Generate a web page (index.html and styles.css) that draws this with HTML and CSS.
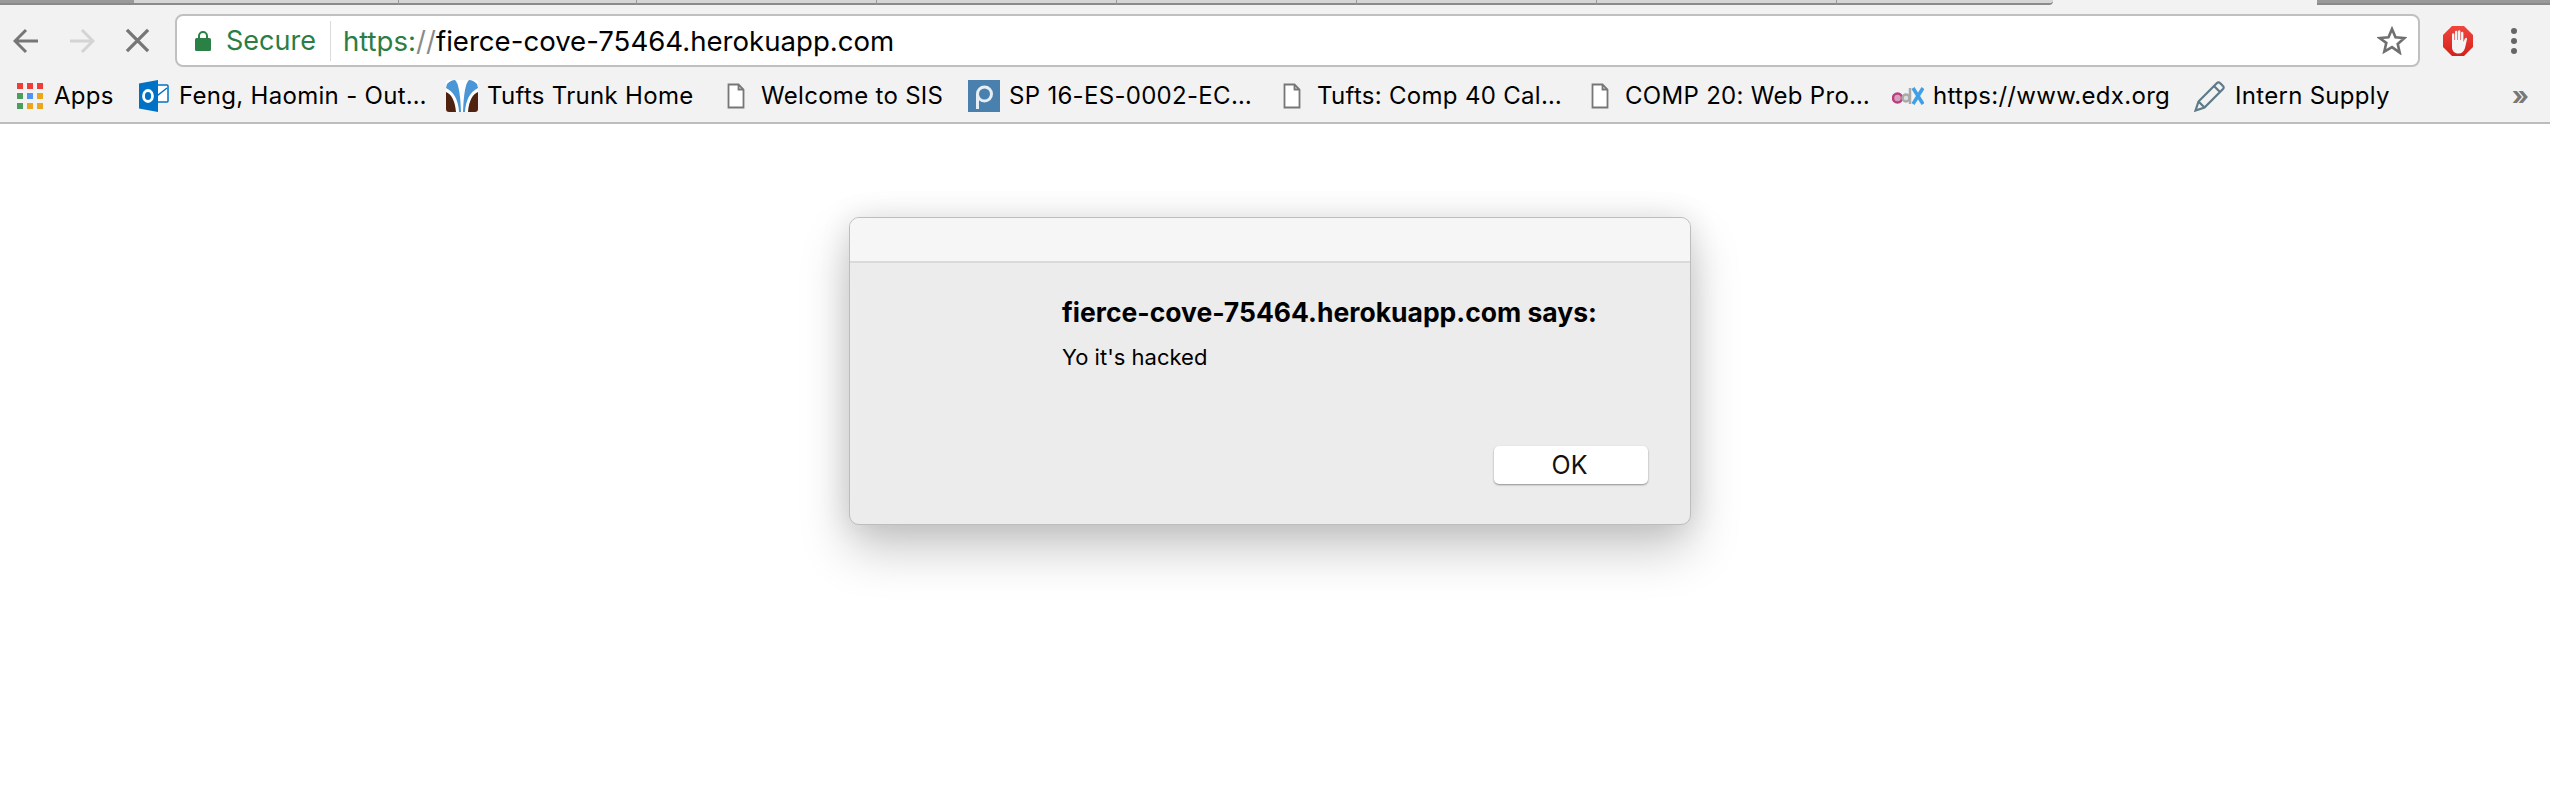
FILE: index.html
```html
<!DOCTYPE html>
<html lang="en">
<head>
  <meta charset="UTF-8" />
  <title>fierce-cove-75464.herokuapp.com</title>
  <link rel="stylesheet" href="styles.css">
</head>
<body>
  <div class="tabstrip">
    <div class="tab tab-dark tab-first"></div>
    <div class="tab tab-a"></div>
    <div class="tab tab-b"></div>
    <div class="tab tab-c"></div>
    <div class="tab tab-c"></div>
    <div class="tab tab-c"></div>
    <div class="tab tab-c"></div>
    <div class="tab tab-c"></div>
    <div class="tab tab-d"></div>
    <div class="tab tab-active"></div>
    <div class="tab tab-dark tab-last"></div>
  </div>

  <div class="toolbar">
    <div class="nav-btns">
      <svg class="nav-icon" viewBox="0 0 26 26"><path d="M25 13H2M13 2L2 13l11 11" fill="none" stroke="#767676" stroke-width="3"/></svg>
      <svg class="nav-icon nav-fwd" viewBox="0 0 26 26"><path d="M1 13h23M13 2l11 11-11 11" fill="none" stroke="#d4d4d4" stroke-width="3"/></svg>
      <svg class="nav-icon nav-stop" viewBox="0 0 26 26"><path d="M2 2l22 22M24 2L2 24" fill="none" stroke="#767676" stroke-width="3.4"/></svg>
    </div>
    <div class="omnibox">
      <svg class="lock" viewBox="0 0 16 21"><path d="M4 9V6a4 4 0 0 1 8 0v3" fill="none" stroke="#2b8046" stroke-width="2"/><rect x="0" y="8" width="16" height="13" rx="1.5" fill="#2b8046"/></svg>
      <span class="secure">Secure</span>
      <span class="omni-sep"></span>
      <span class="url"><span class="url-scheme">https:</span><span class="url-slash">//</span>fierce-cove-75464.herokuapp.com</span>
      <svg class="star" viewBox="0 0 30 29"><path d="M15 3l3.500 8.200 8.900.8-6.700 5.900 2 8.700L15 21.100l-7.700 4.500 2-8.700L2.600 12l8.900-.8z" fill="none" stroke="#707070" stroke-width="2.600"/></svg>
    </div>
    <svg class="abp" viewBox="0 0 30 30">
      <defs><linearGradient id="abpRed" x1="0" y1="0" x2="0" y2="1"><stop offset="0" stop-color="#f2453d"/><stop offset="1" stop-color="#d3211b"/></linearGradient></defs>
      <path d="M9 0h12l9 9v12l-9 9H9l-9-9V9z" fill="url(#abpRed)"/>
      <path d="M9 16V8.500a1.200 1.200 0 0 1 2.400 0V14h.6V6a1.200 1.200 0 0 1 2.400 0v8h.6V5.500a1.200 1.200 0 0 1 2.400 0V14h.6V7a1.200 1.200 0 0 1 2.400 0v9l1.500-3.500c.6-1.300 2.600-.7 2.100.8L22 22c-1 3.500-3 5.500-6.500 5.500C11.500 27.500 9 25 9 21z" fill="#f4f4f4"/>
    </svg>
    <div class="menu-dots"><i></i><i></i><i></i></div>
  </div>

  <div class="bookmarks">
    <div class="bm bm-apps">
      <span class="bm-icon">
        <span class="apps-grid"><i class="red"></i><i class="red"></i><i class="red"></i><i class="green"></i><i class="blue"></i><i class="amber"></i><i class="green"></i><i class="amber"></i><i class="amber"></i></span>
      </span>
      <span class="bm-text">Apps</span>
    </div>
    <div class="bm bm-wide">
      <svg class="bm-icon" viewBox="0 0 32 32"><path d="M11 5h18a1 1 0 0 1 1 1v15a1 1 0 0 1-1 1H11z" fill="#fff" stroke="#0072c6" stroke-width="1.500"/><path d="M12 8l8 7 9-7" fill="none" stroke="#0072c6" stroke-width="1.500"/><path d="M1 3.500L20 0v32L1 28.500z" fill="#0072c6"/><ellipse cx="10" cy="16" rx="4.500" ry="5.500" fill="none" stroke="#fff" stroke-width="2.800"/></svg>
      <span class="bm-text">Feng, Haomin - Out…</span>
    </div>
    <div class="bm bm-trunk">
      <svg class="bm-icon" viewBox="0 0 32 32"><rect width="32" height="32" rx="3" fill="#fff"/><path d="M0 12c5 2 9 8 10 20H3a3 3 0 0 1-3-3zM32 12c-5 2-9 8-10 20h7a3 3 0 0 0 3-3z" fill="#4f2310"/><path d="M1 4Q5 0 9 0q5 4 6 32h-2Q12 14 0 8zM31 4q-4-4-8-4-5 4-6 32h2q1-18 13-24z" fill="#4a96d6"/></svg>
      <span class="bm-text">Tufts Trunk Home</span>
    </div>
    <div class="bm bm-sis">
      <svg class="bm-icon" viewBox="0 0 32 32"><path d="M8.500 4.500h10l5 5v18h-15zM18.500 4.500v5h5" fill="#fff" stroke="#777" stroke-width="1.800"/></svg>
      <span class="bm-text">Welcome to SIS</span>
    </div>
    <div class="bm bm-wide">
      <svg class="bm-icon" viewBox="0 0 32 32"><rect width="32" height="32" fill="#4a80ae"/><circle cx="16.500" cy="14" r="7" fill="none" stroke="#e6eff6" stroke-width="3"/><path d="M9.500 14v15" stroke="#e6eff6" stroke-width="3"/></svg>
      <span class="bm-text">SP 16-ES-0002-EC…</span>
    </div>
    <div class="bm bm-wide">
      <svg class="bm-icon" viewBox="0 0 32 32"><path d="M8.500 4.500h10l5 5v18h-15zM18.500 4.500v5h5" fill="#fff" stroke="#777" stroke-width="1.800"/></svg>
      <span class="bm-text">Tufts: Comp 40 Cal…</span>
    </div>
    <div class="bm bm-wide">
      <svg class="bm-icon" viewBox="0 0 32 32"><path d="M8.500 4.500h10l5 5v18h-15zM18.500 4.500v5h5" fill="#fff" stroke="#777" stroke-width="1.800"/></svg>
      <span class="bm-text">COMP 20: Web Pro…</span>
    </div>
    <div class="bm bm-edx">
      <svg class="bm-icon" viewBox="0 0 32 32"><circle cx="5.500" cy="18" r="4.500" fill="#d9a0be" stroke="#b93f80" stroke-width="2.500"/><circle cx="14" cy="18" r="3.500" fill="#dcdcdc" stroke="#a9a9a9" stroke-width="2.500"/><path d="M18 8v16" stroke="#a9a9a9" stroke-width="2.500"/><path d="M21 8l10 16M31 8L21 24" stroke="#3fa0e6" stroke-width="3.500"/></svg>
      <span class="bm-text">https://www.edx.org</span>
    </div>
    <div class="bm">
      <svg class="bm-icon" viewBox="0 0 32 32"><path d="M1.500 30.500l3-9L23 3a2 2 0 0 1 3 0l3 3a2 2 0 0 1 0 3L10.500 27.500zM4.500 21.500l6 6M20 6l6 6" fill="none" stroke="#5c7a88" stroke-width="2.200"/></svg>
      <span class="bm-text">Intern Supply</span>
    </div>
    <span class="bm-more">»</span>
  </div>

  <div class="dialog">
    <div class="dialog-head"></div>
    <div class="dialog-body">
      <div class="dialog-title">fierce-cove-75464.herokuapp.com says:</div>
      <div class="dialog-msg">Yo it's hacked</div>
    </div>
    <div class="dialog-foot">
      <button class="ok-btn">OK</button>
    </div>
  </div>
</body>
</html>
```

FILE: styles.css
```css
html, body { margin: 0; padding: 0; background: #fff; height: 798px; overflow: hidden; }
body { font-family: Inter, "Liberation Sans", sans-serif; color: #000; }

.tabstrip { display: flex; height: 5px; background: #f2f2f2; }
.tab { height: 3px; background: #d6d6d6; border-bottom: 2px solid #8a8a8a; border-right: 1px solid #9a9a9a; box-sizing: content-box; }
.tab-dark { background: #9a9a9a; border-right: 0; }
.tab-first { width: 134px; }
.tab-a { width: 264px; }
.tab-b { width: 237px; }
.tab-c { width: 239px; }
.tab-d { width: 216px; border-right: 0; border-bottom-right-radius: 4px; }
.tab-active { width: 264px; background: #f2f2f2; border: 0; }
.tab-last { flex: 1; }

.toolbar { display: flex; align-items: center; height: 70px; background: #f2f2f2; padding-top: 1px; box-sizing: border-box; }
.nav-btns { display: flex; align-items: center; width: 175px; padding-left: 13px; box-sizing: border-box; }
.nav-icon { width: 26px; height: 26px; display: block; }
.nav-fwd { margin-left: 30px; }
.nav-stop { margin-left: 30px; width: 25px; height: 25px; }

.omnibox { display: flex; align-items: center; width: 2245px; height: 53px; box-sizing: border-box; background: #fff; border: 2px solid #c0c0c0; border-radius: 8px; padding-left: 18px; font-size: 27px; }
.lock { width: 16px; height: 21px; margin-right: 15px; }
.secure { color: #2b7d45; }
.omni-sep { width: 1px; height: 40px; background: #dcdcdc; margin: 0 12px 0 14px; }
.url { flex: 1; white-space: nowrap; font-size: 27.6px; }
.url-scheme { color: #2b7d45; }
.url-slash { color: #8a8a8a; }
.star { width: 30px; height: 29px; margin-right: 11px; }

.abp { width: 30px; height: 30px; margin-left: 23px; }
.menu-dots { display: flex; flex-direction: column; gap: 4px; margin-left: 38px; }
.menu-dots i { display: block; width: 6px; height: 6px; border-radius: 50%; background: #666; }

.bookmarks { display: flex; align-items: center; height: 49px; background: #f2f2f2; border-bottom: 2px solid #bdbdbd; padding: 0 0 6px 14px; box-sizing: border-box; position: relative; }
.bm { display: flex; align-items: center; gap: 9px; font-size: 24px; letter-spacing: .3px; white-space: nowrap; flex: none; }
.bm-apps { width: 124px; gap: 8px; }
.bm-wide { width: 308px; }
.bm-trunk { width: 274px; }
.bm-sis { width: 248px; }
.bm-edx { width: 302px; }
.bm-icon { width: 32px; height: 32px; display: block; flex: none; }
.bm-more { margin-left: auto; margin-right: 21px; font-size: 26px; line-height: 1; color: #777; font-weight: 700; }

.apps-grid { display: grid; grid-template-columns: repeat(3, 6px); gap: 4px; padding: 3px; }
.apps-grid i { display: block; height: 6px; }
.red { background: #ef3d3a; }
.green { background: #4b9e5b; }
.blue { background: #4d94f5; }
.amber { background: #eba61f; }

.dialog { position: absolute; left: 849px; top: 217px; width: 842px; height: 308px; box-sizing: border-box; background: #ececec; border: 1px solid #bdbdbd; border-radius: 10px; box-shadow: 0 24px 50px rgba(0,0,0,.22), 0 0 30px rgba(0,0,0,.1); display: flex; flex-direction: column; overflow: hidden; }
.dialog-head { height: 43px; background: #f6f6f6; border-bottom: 2px solid #dadada; flex: none; }
.dialog-body { flex: 1; padding: 33px 0 0 212px; }
.dialog-title { font-weight: 700; font-size: 26.5px; line-height: 32px; }
.dialog-msg { font-size: 22px; line-height: 28px; margin-top: 15px; }
.dialog-foot { display: flex; justify-content: flex-end; padding: 0 42px 40px 0; }
.ok-btn { width: 154px; height: 38px; padding: 0 3px 0 0; background: #fff; border: 0; border-radius: 5px; box-shadow: 0 1px 2px rgba(0,0,0,.4); font-family: inherit; font-size: 25px; color: #111; }
```
